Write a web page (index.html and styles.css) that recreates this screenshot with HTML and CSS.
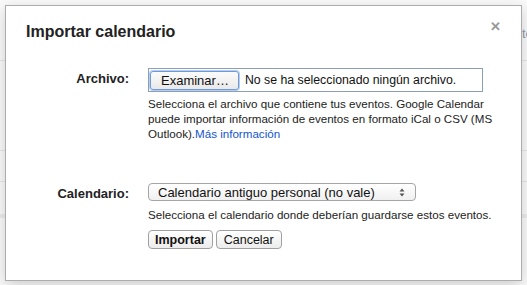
FILE: index.html
```html
<!DOCTYPE html>
<html lang="es">
<head>
    <meta charset="UTF-8">
    <title>Importar calendario</title>
    <link rel="stylesheet" href="styles.css">
</head>
<body>

    <div class="page-bg">
        <span class="bg-text">te</span>
    </div>

    <div class="dialog">
        <div class="dialog-title">Importar calendario</div>
        <span class="close">&#x2715;</span>

        <div class="form-grid">
            <!-- Archivo -->
            <label class="field-label label-file">Archivo:</label>
            <div class="field">
                <div class="file-box">
                    <span class="file-btn">Examinar…</span>
                    <span class="file-name">No se ha seleccionado ningún archivo.</span>
                </div>
                <div class="help help-file">
                    Selecciona el archivo que contiene tus eventos. Google Calendar puede importar información de eventos en formato iCal o CSV (MS Outlook).<a href="#">Más información</a>
                </div>
            </div>

            <!-- Calendario -->
            <label class="field-label label-cal">Calendario:</label>
            <div class="field field-cal">
                <div class="select">
                    <span>Calendario antiguo personal (no vale)</span>
                    <svg class="select-arrows" width="6" height="9" viewBox="0 0 6 9">
                        <path d="M0.5 3.5 L3 0.5 L5.5 3.5 Z" fill="#555"/>
                        <path d="M0.5 5.5 L3 8.5 L5.5 5.5 Z" fill="#555"/>
                    </svg>
                </div>
                <div class="help help-cal">Selecciona el calendario donde deberían guardarse estos eventos.</div>
                <div class="actions">
                    <button class="btn btn-main">Importar</button>
                    <button class="btn">Cancelar</button>
                </div>
            </div>
        </div>
    </div>

</body>
</html>
```

FILE: styles.css
```css
body {
    margin: 0;
    font-family: Arial, "Liberation Sans", sans-serif;
    color: #222;
    background-color: #f7f7f7;
    width: 527px;
    height: 285px;
    overflow: hidden;
    position: relative;
}

/* page behind the dialog */
.page-bg {
    position: absolute;
    left: 0;
    top: 0;
    width: 527px;
    height: 285px;
    background:
        linear-gradient(#e6e6e6, #e6e6e6) 0 60px / 100% 1px no-repeat,
        linear-gradient(#e6e6e6, #e6e6e6) 0 150px / 100% 1px no-repeat,
        linear-gradient(#e6e6e6, #e6e6e6) 0 181px / 100% 1px no-repeat,
        linear-gradient(#ececec, #ececec) 0 214px / 100% 4px no-repeat,
        #fafafa;
}

.bg-text {
    position: absolute;
    left: 522px;
    top: 26px;
    font-size: 13px;
    color: #8a9bb0;
}

.dialog {
    position: relative;
    margin: 5px 0 0 5px;
    width: 515px;
    height: 274px;
    background: #fff;
    border: 1px solid #acacac;
    box-shadow: 0 4px 14px rgba(0, 0, 0, 0.18);
}

.dialog-title {
    font-size: 16px;
    font-weight: bold;
    color: #222;
    padding: 16px 0 0 20px;
    line-height: 20px;
}

.close {
    position: absolute;
    right: 20px;
    top: 13px;
    font-size: 13px;
    font-weight: bold;
    color: #999;
}

.form-grid {
    display: grid;
    grid-template-columns: 109px 1fr;
    column-gap: 19px;
    margin-top: 26px;
    margin-left: 14px;
}

.field-label {
    font-size: 13px;
    font-weight: bold;
    text-align: right;
    color: #222;
}

.label-file {
    padding-top: 3px;
}

.label-cal {
    margin-top: 42px;
    padding-top: 3px;
}

.field-cal {
    margin-top: 42px;
}

/* fake file input */
.file-box {
    display: flex;
    align-items: center;
    width: 333px;
    height: 22px;
    border: 1px solid #8b9fb8;
    font-size: 13px;
}

.file-btn {
    display: inline-block;
    margin-left: 1px;
    height: 17px;
    line-height: 17px;
    padding: 0 9px 0 10px;
    border: 1px solid #6f9ad4;
    border-radius: 3px;
    background: linear-gradient(#fbfbfb, #e9e9e9);
    box-shadow: 0 0 0 1px #b4cdf0;
    color: #111;
}

.file-name {
    margin-left: 6px;
    font-size: 12.3px;
    color: #111;
}

.help {
    font-size: 11.6px;
    line-height: 15px;
    color: #222;
}

.help-file {
    width: 352px;
    margin-top: 4px;
}

.help a {
    color: #1155cc;
    text-decoration: none;
}

/* fake select */
.select {
    display: flex;
    align-items: center;
    justify-content: space-between;
    box-sizing: border-box;
    width: 268px;
    height: 18px;
    padding: 0 10px 0 9px;
    border: 1px solid #a5a5a5;
    border-radius: 4px;
    background: linear-gradient(#ffffff, #f0f0f0);
    font-size: 13px;
    color: #111;
}

.help-cal {
    margin-top: 6px;
}

.actions {
    display: flex;
    gap: 3px;
    margin-top: 8px;
}

.btn {
    height: 19px;
    padding: 0 7px;
    font-family: Arial, "Liberation Sans", sans-serif;
    font-size: 12.5px;
    color: #111;
    border: 1px solid #a0a0a0;
    border-radius: 4px;
    background: linear-gradient(#ffffff, #ececec);
}

.btn-main {
    font-weight: bold;
    padding: 0 6px;
}
```
